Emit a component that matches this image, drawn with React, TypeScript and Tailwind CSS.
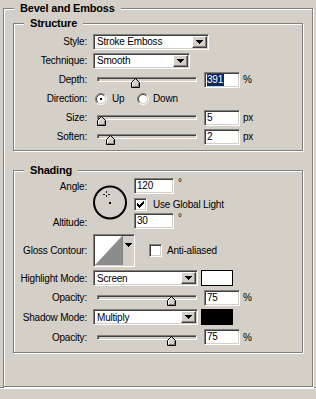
import React from 'react';
import clsx from 'clsx';

const sunken =
  'border border-t-[#808080] border-l-[#808080] border-r-white border-b-white shadow-[inset_1px_1px_0_#404040,inset_-1px_-1px_0_#d4d0c8]';
const raised =
  'border border-t-white border-l-white border-r-[#404040] border-b-[#404040] shadow-[inset_-1px_-1px_0_#808080]';

function Group({
  title,
  className,
  children,
}: {
  title: string;
  className?: string;
  children?: React.ReactNode;
}) {
  return (
    <div
      className={clsx(
        'relative border border-[#808080] shadow-[inset_1px_1px_0_#fff,1px_1px_0_#fff]',
        className,
      )}
    >
      <span className="absolute -top-[7px] left-[10px] bg-[#d4d0c8] px-[6px] text-[11px] leading-[13px] font-bold">
        {title}
      </span>
      {children}
    </div>
  );
}

function DownArrow() {
  return (
    <svg width="7" height="4" viewBox="0 0 7 4" shapeRendering="crispEdges">
      <path d="M0 0h7v1H0zM1 1h5v1H1zM2 2h3v1H2zM3 3h1v1H3z" fill="#000" />
    </svg>
  );
}

function Select({ value, className }: { value: string; className: string }) {
  return (
    <div className={clsx('flex h-[16px] items-center bg-white', sunken, className)}>
      <span className="flex-1 pl-[3px]">{value}</span>
      <span
        className={clsx(
          'mr-[1px] flex h-[12px] w-[15px] items-center justify-center bg-[#d4d0c8]',
          raised,
        )}
      >
        <DownArrow />
      </span>
    </div>
  );
}

function Field({
  value,
  className,
  selected,
}: {
  value: string;
  className: string;
  selected?: boolean;
}) {
  return (
    <div className={clsx('flex h-[16px] items-center bg-white pl-[2px]', sunken, className)}>
      <span className={clsx('leading-[12px]', selected && 'bg-[#0a246a] pr-[1px] text-white')}>
        {value}
      </span>
    </div>
  );
}

function Thumb({ left }: { left: number }) {
  return (
    <svg
      width="9"
      height="10"
      viewBox="0 0 9 10"
      className="absolute top-[8px]"
      style={{ left }}
    >
      <polygon points="4.5,0.5 8.5,4.5 8.5,9.5 0.5,9.5 0.5,4.5" fill="#d4d0c8" stroke="#000" />
      <polyline points="1.5,8.5 1.5,4.9 4.5,1.9" fill="none" stroke="#fff" />
      <polyline points="1.5,8.5 7.5,8.5 7.5,4.9" fill="none" stroke="#808080" />
    </svg>
  );
}

function Slider({ pos }: { pos: number }) {
  return (
    <div className="relative ml-[4px] h-[19px] w-[100px]">
      <div className={clsx('mt-[7px] h-[5px] bg-[#d4d0c8]', sunken)} />
      <Thumb left={pos} />
    </div>
  );
}

function Radio({ checked }: { checked?: boolean }) {
  return (
    <svg width="12" height="12" viewBox="0 0 12 12">
      <circle cx="6" cy="6" r="4.5" fill="#fff" />
      <path d="M2.1 9.9A5.5 5.5 0 0 1 9.9 2.1" fill="none" stroke="#808080" />
      <path d="M9.9 2.1A5.5 5.5 0 0 1 2.1 9.9" fill="none" stroke="#fff" />
      <path d="M2.8 9.2A4.5 4.5 0 0 1 9.2 2.8" fill="none" stroke="#404040" />
      <path d="M9.2 2.8A4.5 4.5 0 0 1 2.8 9.2" fill="none" stroke="#d4d0c8" />
      {checked && <rect x="5" y="5" width="2" height="2" fill="#000" />}
    </svg>
  );
}

function Check({ checked }: { checked?: boolean }) {
  return (
    <span
      className={clsx(
        'flex h-[13px] w-[13px] shrink-0 items-center justify-center bg-white',
        sunken,
      )}
    >
      {checked && (
        <svg width="7" height="7" viewBox="0 0 7 7" shapeRendering="crispEdges">
          <path
            d="M0 2h1v3H0zM1 3h1v3H1zM2 4h1v3H2zM3 3h1v3H3zM4 2h1v3H4zM5 1h1v3H5zM6 0h1v3H6z"
            fill="#000"
          />
        </svg>
      )}
    </span>
  );
}

function Row({
  label,
  className,
  children,
}: {
  label: string;
  className?: string;
  children?: React.ReactNode;
}) {
  return (
    <div className={clsx('flex items-center', className ?? 'h-[19px]')}>
      <span className="mr-[6px] w-[73px] shrink-0 text-right">{label}</span>
      {children}
    </div>
  );
}

function Dial() {
  return (
    <svg width="35" height="36" viewBox="0 0 35 36" className="mt-[8px] shrink-0">
      <circle cx="17" cy="17.5" r="16" fill="none" stroke="#000" strokeWidth="2" />
      <g stroke="#202020" shapeRendering="crispEdges">
        <line x1="13.5" y1="6" x2="13.5" y2="8" />
        <line x1="13.5" y1="10" x2="13.5" y2="12" />
        <line x1="10" y1="9.5" x2="12" y2="9.5" />
        <line x1="15" y1="9.5" x2="17" y2="9.5" />
      </g>
      <rect x="16" y="17" width="2" height="2" fill="#000" />
    </svg>
  );
}

function Contour() {
  return (
    <div className={clsx('flex h-[33px] w-[42px] shrink-0 bg-[#d4d0c8] p-[1px]', sunken)}>
      <svg width="27" height="29" viewBox="0 0 27 29" className="shrink-0 bg-white">
        <polygon points="0,29 27,0 27,29" fill="#8c8c8c" />
      </svg>
      <div className="flex flex-1 justify-center border-l border-[#808080] pt-[7px]">
        <DownArrow />
      </div>
    </div>
  );
}

export default function App() {
  return (
    <div className="h-[399px] w-[316px] overflow-hidden bg-[#d4d0c8] pt-[8px] font-['Liberation_Sans',Arial,sans-serif] text-[10px] leading-[13px] tracking-[-0.2px] text-black">
      <Group title="Bevel and Emboss" className="ml-[3px] h-[379px] w-[310px] pt-[14px] pl-[9px]">
        <Group title="Structure" className="h-[128px] w-[290px] pt-[8px]">
          <Row label="Style:">
            <Select value="Stroke Emboss" className="w-[116px]" />
          </Row>
          <Row label="Technique:">
            <Select value="Smooth" className="w-[97px]" />
          </Row>
          <Row label="Depth:">
            <Slider pos={34} />
            <Field value="391" selected className="ml-[7px] w-[36px]" />
            <span className="ml-[3px]">%</span>
          </Row>
          <Row label="Direction:">
            <span className="ml-[2px] flex">
              <Radio checked />
            </span>
            <span className="ml-[5px] w-[25px]">Up</span>
            <Radio />
            <span className="ml-[4px]">Down</span>
          </Row>
          <Row label="Size:">
            <Slider pos={0} />
            <Field value="5" className="ml-[7px] w-[36px]" />
            <span className="ml-[3px]">px</span>
          </Row>
          <Row label="Soften:">
            <Slider pos={9} />
            <Field value="2" className="ml-[7px] w-[36px]" />
            <span className="ml-[3px]">px</span>
          </Row>
        </Group>

        <Group title="Shading" className="mt-[19px] h-[183px] w-[290px] pt-[6px]">
          <div className="flex h-[53px]">
            <div className="mr-[6px] flex w-[73px] shrink-0 flex-col text-right">
              <span className="mt-[3px]">Angle:</span>
              <span className="mt-[23px]">Altitude:</span>
            </div>
            <Dial />
            <div className="ml-[6px] flex flex-col pt-[1px]">
              <div className="flex items-start">
                <Field value="120" className="w-[40px]" />
                <span className="ml-[4px] leading-[10px]">°</span>
              </div>
              <div className="mt-[4px] flex items-center">
                <Check checked />
                <span className="ml-[6px]">Use Global Light</span>
              </div>
              <div className="mt-[2px] flex items-start">
                <Field value="30" className="w-[40px]" />
                <span className="ml-[4px] leading-[10px]">°</span>
              </div>
            </div>
          </div>
          <Row label="Gloss Contour:" className="mt-[4px] h-[33px]">
            <Contour />
            <span className="ml-[14px] flex">
              <Check />
            </span>
            <span className="ml-[5px]">Anti-aliased</span>
          </Row>
          <Row label="Highlight Mode:" className="mt-[1px] h-[20px]">
            <Select value="Screen" className="w-[105px]" />
            <span className="ml-[3px] h-[16px] w-[32px] border border-black bg-white" />
          </Row>
          <Row label="Opacity:" className="h-[19px]">
            <Slider pos={70} />
            <Field value="75" className="ml-[7px] w-[36px]" />
            <span className="ml-[3px]">%</span>
          </Row>
          <Row label="Shadow Mode:" className="h-[20px]">
            <Select value="Multiply" className="w-[105px]" />
            <span className="ml-[3px] h-[16px] w-[32px] border border-black bg-black" />
          </Row>
          <Row label="Opacity:" className="h-[20px]">
            <Slider pos={70} />
            <Field value="75" className="ml-[7px] w-[36px]" />
            <span className="ml-[3px]">%</span>
          </Row>
        </Group>
      </Group>
      {/* full-width etched rule under the panel */}
      <div className="h-[2px] w-[316px] border-t border-[#808080] bg-white" />
    </div>
  );
}
